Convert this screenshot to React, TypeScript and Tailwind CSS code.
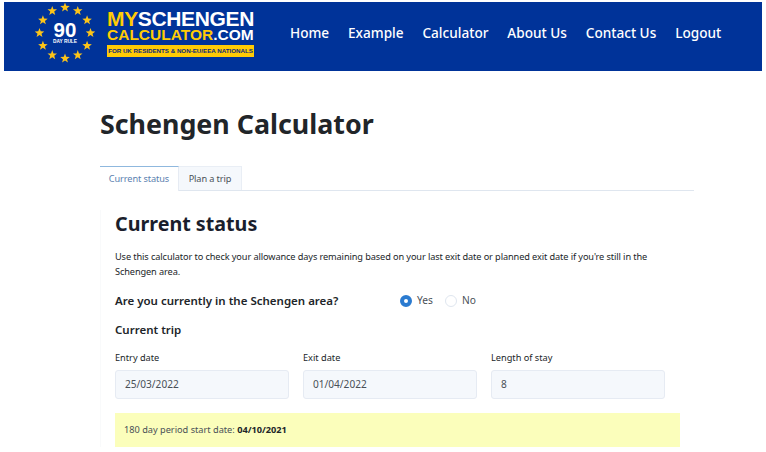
const navLinks = ["Home", "Example", "Calculator", "About Us", "Contact Us", "Logout"];

const font = "font-['Noto_Sans','Open_Sans',sans-serif]";

// 12 stars around the "90 day rule" badge
const stars = Array.from({ length: 12 }, (_, i) => {
  const a = (i * Math.PI) / 6;
  return { x: 26 + 25.5 * Math.sin(a), y: 26 - 25.5 * Math.cos(a) };
});

function starPoints(cx: number, cy: number, r: number) {
  const pts: string[] = [];
  for (let i = 0; i < 10; i++) {
    const rad = i % 2 === 0 ? r : r * 0.42;
    const a = (i * Math.PI) / 5;
    pts.push(`${(cx + rad * Math.sin(a)).toFixed(2)},${(cy - rad * Math.cos(a)).toFixed(2)}`);
  }
  return pts.join(" ");
}

function Logo() {
  return (
    <div className="flex items-center">
      <svg width="60" height="60" viewBox="-4 -4 60 60" className="mt-[-8px] ml-[31px]">
        {stars.map((s, i) => (
          <polygon key={i} points={starPoints(s.x, s.y, 5)} fill="#fcc419" />
        ))}
        <text x="26" y="30" textAnchor="middle" fill="#fff" fontSize="20.5" fontWeight="700" fontFamily="Liberation Sans">
          90
        </text>
        <text x="26" y="36" textAnchor="middle" fill="#fff" fontSize="4.8" fontWeight="700" fontFamily="Liberation Sans">
          DAY RULE
        </text>
      </svg>
      <div className="mb-[6px] ml-[12px] flex w-[147px] flex-col font-['Liberation_Sans',sans-serif] font-bold">
        <div className="flex h-[18px] text-[21px] leading-[18px] tracking-[-0.35px] whitespace-nowrap text-white">
          <span className="text-[#ffcb05]">MY</span>
          <span>SCHENGEN</span>
        </div>
        <div className="flex h-[14px] text-[15.5px] leading-[14px] whitespace-nowrap text-white">
          <span className="text-[#ffcb05]">CALCULATOR</span>
          <span>.COM</span>
        </div>
        <div className="mt-[3px] h-[12px] w-[147px] bg-[#ffcb05] text-center text-[6.2px] leading-[12px] whitespace-nowrap text-[#0b2a7a]">
          FOR UK RESIDENTS &amp; NON-EU/EEA NATIONALS
        </div>
      </div>
    </div>
  );
}

function DateField({ label, value }: { label: string; value: string }) {
  return (
    <div className="w-[174px]">
      <label className="block text-[9.2px] leading-[14px] text-[#212529]">{label}</label>
      <div className="mt-[5px] flex h-[29px] items-center rounded-[3px] border border-[#e6ebf3] bg-[#f5f8fc] px-[9px] text-[10.1px] text-[#495057]">
        {value}
      </div>
    </div>
  );
}

export default function App() {
  return (
    <div className={`min-h-[452px] w-[766px] overflow-hidden bg-white pt-[2px] ${font}`}>
      <header className="mx-[4px] flex h-[69px] items-center bg-[#003399]">
        <Logo />
        <nav className="mt-[-6px] ml-[36px] flex gap-[18.9px] text-[13.6px] font-medium text-white">
          {navLinks.map((link) => (
            <a key={link}>{link}</a>
          ))}
        </nav>
      </header>

      <main className="ml-[100px] w-[594px]">
        <h1 className="mt-[34px] text-[26.8px] leading-[38px] font-bold text-[#212529]">Schengen Calculator</h1>

        <div className="mt-[23px] flex h-[25px] border-b border-[#dfe6ef] text-[9.2px] tracking-[-0.1px]">
          <div className="mb-[-1px] flex h-[25px] w-[79px] items-center justify-center border-t border-r border-t-[#8fb8de] border-r-[#e6ebf3] bg-white text-[#5b7fb0]">
            Current status
          </div>
          <div className="flex h-[24px] w-[63px] items-center justify-center border-t border-r border-[#e9eef5] bg-[#f5f8fc] text-[#495057]">
            Plan a trip
          </div>
        </div>

        <section className="border-l border-[#f9fafb] px-[14px] text-[#212529]">
          <h2 className="mt-[19px] text-[19.7px] leading-[28px] font-bold text-[#1a1e2c]">Current status</h2>
          <p className="mt-[11px] w-[545px] text-[9.2px] leading-[15px] tracking-[-0.1px]">
            Use this calculator to check your allowance days remaining based on your last exit date or planned exit
            date if you&apos;re still in the Schengen area.
          </p>

          <div className="mt-[12px] flex h-[20px] items-center">
            <div className="w-[285px] text-[11.5px] font-semibold">Are you currently in the Schengen area?</div>
            <div className="flex items-center text-[10.2px] text-[#495057]">
              <span className="h-[12px] w-[12px] rounded-full border-[4px] border-[#2b7bd0] bg-white" />
              <span className="ml-[5px]">Yes</span>
              <span className="ml-[12px] h-[12px] w-[12px] rounded-full border border-[#dfe6ef] bg-white" />
              <span className="ml-[5px]">No</span>
            </div>
          </div>

          <h3 className="mt-[9px] text-[11.5px] leading-[20px] font-semibold">Current trip</h3>

          <div className="mt-[11px] flex gap-[14px]">
            <DateField label="Entry date" value="25/03/2022" />
            <DateField label="Exit date" value="01/04/2022" />
            <DateField label="Length of stay" value="8" />
          </div>

          <div className="mt-[14px] flex h-[34px] w-[565px] items-center bg-[#fbfebb] px-[9px] text-[9.2px]">
            <span className="text-[#495057]">180 day period start date:&nbsp;</span>
            <strong className="font-bold text-[#212529]">04/10/2021</strong>
          </div>
        </section>
      </main>
    </div>
  );
}
